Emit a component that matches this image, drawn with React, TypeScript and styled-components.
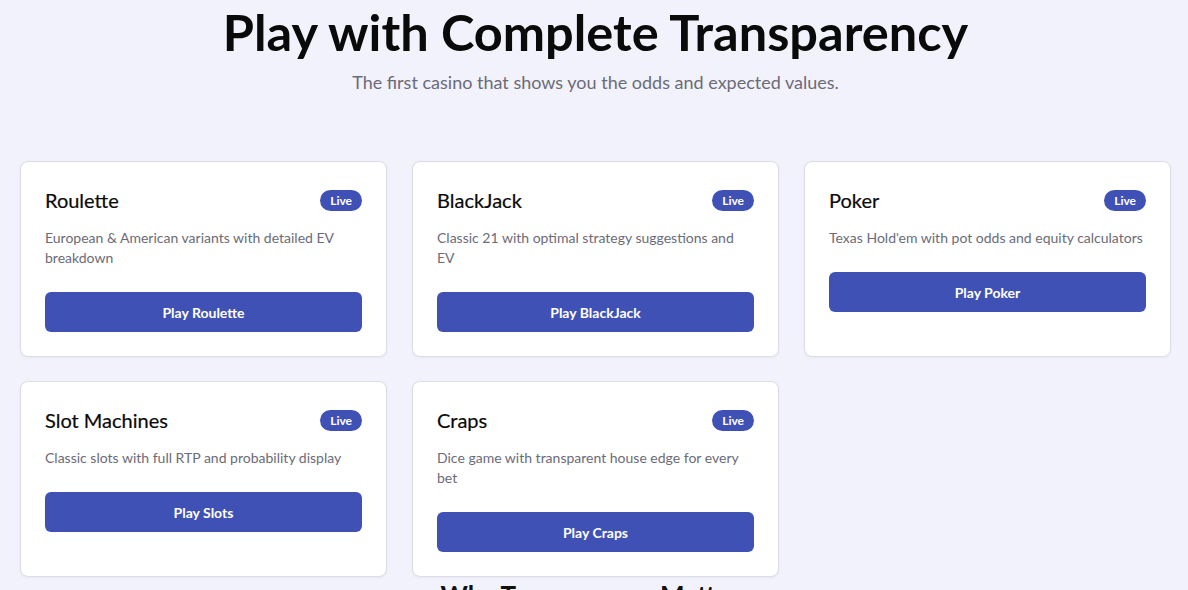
import React from 'react'
import styled, {createGlobalStyle} from 'styled-components'

const GlobalStyle = createGlobalStyle`
  * { box-sizing: border-box; }
  body {
    margin: 0;
    background-color: #f2f2fc;
    font-family: Lato, "Open Sans", sans-serif;
    color: #111;
  }
`;

const Page = styled.main`
  padding: 0 17px 0 20px;
`;

const Hero = styled.section`
  text-align: center;
  padding-top: 2px;
  margin-bottom: 65px;
`;

const HeroTitle = styled.h1`
  font-size: 50.5px;
  font-weight: 700;
  line-height: 60px;
  margin: 0 0 6px;
  color: #0a0a0a;
`;

const HeroSubtitle = styled.p`
  font-size: 18px;
  color: #6b6b78;
  margin: 0;
  line-height: 28px;
`;

const GameGrid = styled.div`
  display: grid;
  grid-template-columns: repeat(3, 1fr);
  gap: 24px 25px;
`;

const Card = styled.div`
  background: #fff;
  border: 1px solid #dcdce8;
  border-radius: 8px;
  padding: 24px;
  box-shadow: 0 1px 3px rgba(30, 30, 80, 0.05);
  display: flex;
  flex-direction: column;
`;

const CardHeader = styled.div`
  display: flex;
  align-items: center;
  justify-content: space-between;
  margin-bottom: 14px;
`;

const CardTitle = styled.h3`
  font-size: 20px;
  font-weight: 400;
  margin: 0;
  line-height: 28px;
  color: #0a0a0a;
  -webkit-text-stroke: 0.2px #0a0a0a;
`;

const Badge = styled.span`
  background: #3f51b5;
  color: #fff;
  font-size: 12px;
  font-weight: 700;
  border-radius: 999px;
  padding: 2px 10px;
  line-height: 17px;
`;

const CardText = styled.p`
  font-size: 14px;
  line-height: 20px;
  color: #6b6b78;
  margin: 0 0 24px;
`;

const PlayButton = styled.button`
  font-family: inherit;
  background: #3f51b5;
  color: #fff;
  border: none;
  border-radius: 6px;
  height: 40px;
  font-size: 14px;
  font-weight: 700;
  cursor: pointer;
  width: 100%;
`;

const SectionTitle = styled.h2`
  text-align: center;
  font-size: 26px;
  font-weight: 700;
  line-height: 32px;
  margin: 2px 0 0;
`;

const games = [
  {name: 'Roulette', text: 'European & American variants with detailed EV breakdown', cta: 'Play Roulette'},
  {name: 'BlackJack', text: 'Classic 21 with optimal strategy suggestions and EV', cta: 'Play BlackJack'},
  {name: 'Poker', text: "Texas Hold'em with pot odds and equity calculators", cta: 'Play Poker'},
  {name: 'Slot Machines', text: 'Classic slots with full RTP and probability display', cta: 'Play Slots'},
  {name: 'Craps', text: 'Dice game with transparent house edge for every bet', cta: 'Play Craps'},
]

const App: React.FC = () => {
  return (
    <>
      <GlobalStyle />
      <Page>
        <Hero>
          <HeroTitle>Play with Complete Transparency</HeroTitle>
          <HeroSubtitle>The first casino that shows you the odds and expected values.</HeroSubtitle>
        </Hero>
        <GameGrid>
          {games.map(g => (
            <Card key={g.name}>
              <CardHeader>
                <CardTitle>{g.name}</CardTitle>
                <Badge>Live</Badge>
              </CardHeader>
              <CardText>{g.text}</CardText>
              <PlayButton>{g.cta}</PlayButton>
            </Card>
          ))}
        </GameGrid>
        <SectionTitle>Why Transparency Matters</SectionTitle>
      </Page>
    </>
  )
}

export default App
